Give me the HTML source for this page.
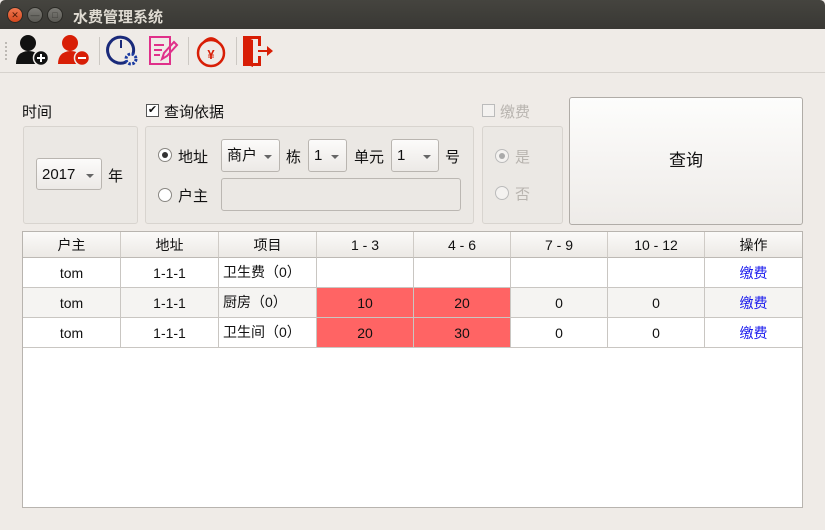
<!DOCTYPE html>
<html><head><meta charset="utf-8"><style>
*{margin:0;padding:0;box-sizing:border-box}
body{width:825px;height:530px;background:#efebe7;font-family:"Liberation Sans","Noto Sans CJK SC",sans-serif;font-size:14px;color:#111;position:relative;overflow:hidden}
.a{position:absolute}
.title{left:0;top:0;width:825px;height:29px;background:linear-gradient(#45443f,#393834);border-radius:5px 5px 0 0}
.wb{top:7px;width:16px;height:16px;border-radius:50%;border:1px solid #2a2925;font-size:9px;text-align:center;line-height:14px;color:#3a3935;background:linear-gradient(#7c7b76,#5a5954)}
.group{background:#ebe8e4;border:1px solid #d8d4cf;border-radius:3px}
.combo{background:linear-gradient(#fcfbfa,#ece9e6);border:1px solid #b9b5b0;border-radius:3px;font-size:15px;line-height:32px;padding-left:5px}
.combo:after{content:"";position:absolute;right:7px;top:15px;border:4px solid transparent;border-top:4px solid #666;border-bottom:none}
.radio{width:14px;height:14px;border-radius:50%;border:1px solid #8a8782;background:#fff}
.hd{top:232px;height:26px;background:linear-gradient(#fbfaf9,#ece9e5);border-right:1px solid #cfcbc6;border-bottom:1px solid #bdb9b4;text-align:center;line-height:27px;font-size:14px}
.c{height:30px;border-right:1px solid #c9c6c2;border-bottom:1px solid #c9c6c2;text-align:center;line-height:31px;font-size:14px}
</style></head><body>
<div class="a title"></div>
<div class="a wb" style="left:7px;background:linear-gradient(#f07850,#d4481e);color:#4a1a08">✕</div>
<div class="a wb" style="left:27px">—</div>
<div class="a wb" style="left:47px">□</div>
<div class="a" style="left:73px;top:6px;color:#dfdbd2;font-size:15px;font-weight:bold">水费管理系统</div>
<div class="a" style="left:0;top:72px;width:825px;height:1px;background:#d6d2cd"></div>
<div class="a" style="left:5px;top:42px;width:2px;height:18px;border-left:2px dotted #bdb9b4"></div>
<svg class="a" style="left:14px;top:33px" width="270" height="36" viewBox="0 0 270 36">
 <circle cx="14" cy="10" r="8" fill="#111"/><path d="M2 31 Q2 19 14 18 Q23 18 25 24 L25 31Z" fill="#111"/>
 <circle cx="27" cy="25" r="7.5" fill="#111" stroke="#efebe7" stroke-width="1.5"/><path d="M23 25h8M27 21v8" stroke="#fff" stroke-width="2"/>
 <circle cx="56" cy="10" r="8" fill="#d81e06"/><path d="M44 31 Q44 19 56 18 Q65 18 67 24 L67 31Z" fill="#d81e06"/>
 <circle cx="68" cy="25" r="7.5" fill="#d81e06" stroke="#efebe7" stroke-width="1.5"/><path d="M64 25h8" stroke="#fff" stroke-width="2"/>
 <rect x="85" y="4" width="1" height="28" fill="#ccc8c3"/>
 <path d="M112 29 A13 13 0 1 1 119 21" fill="none" stroke="#1a2a7a" stroke-width="3"/>
 <path d="M107 7v8" stroke="#1a2a7a" stroke-width="2"/>
 <circle cx="117" cy="26" r="5" fill="none" stroke="#1a3aa0" stroke-width="3" stroke-dasharray="2.5 1.5"/>
 <rect x="136" y="4" width="20" height="27" fill="none" stroke="#e0308a" stroke-width="2"/>
 <path d="M140 12h10M140 17h8M140 22h6" stroke="#e0308a" stroke-width="2"/>
 <path d="M148 26l2-6 10-11 3 3-10 11z" fill="none" stroke="#e0308a" stroke-width="2"/>
 <rect x="174" y="4" width="1" height="28" fill="#ccc8c3"/>
 <circle cx="197" cy="20" r="13" fill="none" stroke="#d81e06" stroke-width="2.5"/>
 <path d="M190 9 Q197 2 204 9" fill="none" stroke="#d81e06" stroke-width="2.5"/>
 <text x="197" y="26" text-anchor="middle" font-size="13" fill="#d81e06" font-weight="bold">¥</text>
 <rect x="222" y="4" width="1" height="28" fill="#ccc8c3"/>
 <path d="M229 3h18v10h-3v-7h-9v24h9v-7h3v10h-18z" fill="#d81e06"/>
 <path d="M229 3l10 4v27l-10-4z" fill="#d81e06"/>
 <path d="M244 17h9v-4l6 5-6 5v-4h-9z" fill="#d81e06"/>
</svg>
<div class="a" style="left:22px;top:101px;font-size:15px">时间</div>
<div class="a group" style="left:23px;top:126px;width:115px;height:98px"></div>
<div class="a combo" style="left:36px;top:158px;width:66px;height:32px">2017</div>
<div class="a" style="left:108px;top:165px;font-size:15px">年</div>
<div class="a" style="left:146px;top:104px;width:13px;height:13px;border:1px solid #555;background:#fff;font-size:11px;line-height:11px;text-align:center">✔</div>
<div class="a" style="left:164px;top:101px;font-size:15px">查询依据</div>
<div class="a group" style="left:145px;top:126px;width:329px;height:98px"></div>
<div class="a radio" style="left:158px;top:148px"><div class="a" style="left:3px;top:3px;width:6px;height:6px;border-radius:50%;background:#333"></div></div>
<div class="a" style="left:178px;top:146px;font-size:15px">地址</div>
<div class="a combo" style="left:221px;top:139px;width:59px;height:33px">商户</div>
<div class="a" style="left:286px;top:146px;font-size:15px">栋</div>
<div class="a combo" style="left:308px;top:139px;width:39px;height:33px">1</div>
<div class="a" style="left:354px;top:146px;font-size:15px">单元</div>
<div class="a combo" style="left:391px;top:139px;width:48px;height:33px">1</div>
<div class="a" style="left:445px;top:146px;font-size:15px">号</div>
<div class="a radio" style="left:158px;top:188px"></div>
<div class="a" style="left:178px;top:185px;font-size:15px">户主</div>
<div class="a" style="left:221px;top:178px;width:240px;height:33px;border:1px solid #bbb7b2;border-radius:3px;background:#ebe8e4"></div>
<div class="a" style="left:482px;top:104px;width:13px;height:13px;border:1px solid #bbb;background:#f4f2f0"></div>
<div class="a" style="left:500px;top:101px;font-size:15px;color:#b8b4af">缴费</div>
<div class="a group" style="left:482px;top:126px;width:81px;height:98px"></div>
<div class="a radio" style="left:495px;top:149px;border-color:#bbb;background:#f4f2f0"><div class="a" style="left:3px;top:3px;width:6px;height:6px;border-radius:50%;background:#aaa"></div></div>
<div class="a" style="left:515px;top:146px;font-size:15px;color:#b8b4af">是</div>
<div class="a radio" style="left:495px;top:186px;border-color:#bbb;background:#f4f2f0"></div>
<div class="a" style="left:515px;top:183px;font-size:15px;color:#b8b4af">否</div>
<div class="a" style="left:569px;top:97px;width:234px;height:128px;border:1px solid #b0aca7;border-radius:3px;background:linear-gradient(#fdfdfc,#eeebe8);text-align:center;line-height:126px;font-size:17px">查询</div>
<div class="a" style="left:22px;top:231px;width:781px;height:277px;border:1px solid #b8b4af;background:#fff"></div>
<div class="a hd" style="left:23px;width:98px">户主</div>
<div class="a hd" style="left:121px;width:98px">地址</div>
<div class="a hd" style="left:219px;width:98px">项目</div>
<div class="a hd" style="left:317px;width:97px">1 - 3</div>
<div class="a hd" style="left:414px;width:97px">4 - 6</div>
<div class="a hd" style="left:511px;width:97px">7 - 9</div>
<div class="a hd" style="left:608px;width:97px">10 - 12</div>
<div class="a hd" style="left:705px;width:97px;border-right:none">操作</div>
<div class="a" style="left:23px;top:258px">
<div class="a c" style="left:0;top:0;width:98px">tom</div>
<div class="a c" style="left:98px;top:0;width:98px">1-1-1</div>
<div class="a c" style="left:196px;top:0;width:98px;text-align:left;padding-left:4px;line-height:28px">卫生费（0）</div>
<div class="a c" style="left:294px;top:0;width:97px"></div>
<div class="a c" style="left:391px;top:0;width:97px"></div>
<div class="a c" style="left:488px;top:0;width:97px"></div>
<div class="a c" style="left:585px;top:0;width:97px"></div>
<div class="a c" style="left:682px;top:0;width:97px;color:#1a1aee;border-right:none">缴费</div>
<div class="a c" style="left:0;top:30px;width:98px;background:#f5f4f2">tom</div>
<div class="a c" style="left:98px;top:30px;width:98px;background:#f5f4f2">1-1-1</div>
<div class="a c" style="left:196px;top:30px;width:98px;background:#f5f4f2;text-align:left;padding-left:4px;line-height:28px">厨房（0）</div>
<div class="a c" style="left:294px;top:30px;width:97px;background:#ff6464">10</div>
<div class="a c" style="left:391px;top:30px;width:97px;background:#ff6464">20</div>
<div class="a c" style="left:488px;top:30px;width:97px;background:#f5f4f2">0</div>
<div class="a c" style="left:585px;top:30px;width:97px;background:#f5f4f2">0</div>
<div class="a c" style="left:682px;top:30px;width:97px;background:#f5f4f2;color:#1a1aee;border-right:none">缴费</div>
<div class="a c" style="left:0;top:60px;width:98px">tom</div>
<div class="a c" style="left:98px;top:60px;width:98px">1-1-1</div>
<div class="a c" style="left:196px;top:60px;width:98px;text-align:left;padding-left:4px;line-height:28px">卫生间（0）</div>
<div class="a c" style="left:294px;top:60px;width:97px;background:#ff6464">20</div>
<div class="a c" style="left:391px;top:60px;width:97px;background:#ff6464">30</div>
<div class="a c" style="left:488px;top:60px;width:97px">0</div>
<div class="a c" style="left:585px;top:60px;width:97px">0</div>
<div class="a c" style="left:682px;top:60px;width:97px;color:#1a1aee;border-right:none">缴费</div>
</div>
</body></html>
